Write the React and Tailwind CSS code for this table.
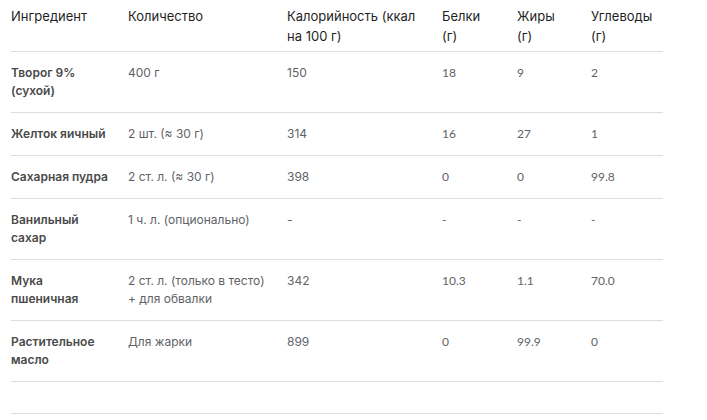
const ROWS = [
  { name: 'Творог 9% (сухой)', qty: '400 г', kcal: '150', p: '18', f: '9', c: '2' },
  { name: 'Желток яичный', qty: '2 шт. (≈ 30 г)', kcal: '314', p: '16', f: '27', c: '1' },
  { name: 'Сахарная пудра', qty: '2 ст. л. (≈ 30 г)', kcal: '398', p: '0', f: '0', c: '99.8' },
  { name: 'Ванильный сахар', qty: '1 ч. л. (опционально)', kcal: '-', p: '-', f: '-', c: '-' },
  { name: 'Мука пшеничная', qty: '2 ст. л. (только в тесто) + для обвалки', kcal: '342', p: '10.3', f: '1.1', c: '70.0' },
  { name: 'Растительное масло', qty: 'Для жарки', kcal: '899', p: '0', f: '99.9', c: '0' },
]

// Узкие колонки с граммами переносят "(г)" на вторую строку
const HEADERS = [
  { text: 'Ингредиент', narrow: false },
  { text: 'Количество', narrow: false },
  { text: 'Калорийность (ккал на 100 г)', narrow: false },
  { text: 'Белки (г)', narrow: true },
  { text: 'Жиры (г)', narrow: true },
  { text: 'Углеводы (г)', narrow: false },
]

export default function App() {
  return (
    <div className="min-h-[420px] bg-white pl-[11px] font-['Inter',sans-serif]">
      <table className="w-[652px] table-fixed border-collapse text-left">
        <colgroup>
          <col className="w-[117px]" />
          <col className="w-[159px]" />
          <col className="w-[155px]" />
          <col className="w-[75px]" />
          <col className="w-[74px]" />
          <col className="w-[72px]" />
        </colgroup>
        <thead>
          <tr className="border-b border-[#dcdde1]">
            {HEADERS.map((h) => (
              <th
                key={h.text}
                className={
                  h.narrow
                    ? 'pr-7 pt-[6px] pb-[5px] align-top text-[13px] leading-[20px] font-normal text-[#1f1f1f]'
                    : 'pr-4 pt-[6px] pb-[5px] align-top text-[13px] leading-[20px] font-normal text-[#1f1f1f]'
                }
              >
                {h.text}
              </th>
            ))}
          </tr>
        </thead>
        <tbody className="text-[12px] leading-[18px] text-[#5f6368]">
          {ROWS.map((r) => (
            <tr key={r.name} className="border-b border-[#dcdde1]">
              <td className="pr-4 py-3 align-top font-semibold text-[#4a4a4a]">{r.name}</td>
              <td className="pr-4 py-3 align-top">{r.qty}</td>
              <td className="pr-4 py-3 align-top">{r.kcal}</td>
              <td className="pr-4 py-3 align-top font-['Lato',sans-serif]">{r.p}</td>
              <td className="pr-4 py-3 align-top font-['Lato',sans-serif]">{r.f}</td>
              <td className="pr-4 py-3 align-top font-['Lato',sans-serif]">{r.c}</td>
            </tr>
          ))}
          <tr className="border-b border-[#dcdde1]">
            <td colSpan={6} className="h-[32px]"></td>
          </tr>
        </tbody>
      </table>
    </div>
  )
}
